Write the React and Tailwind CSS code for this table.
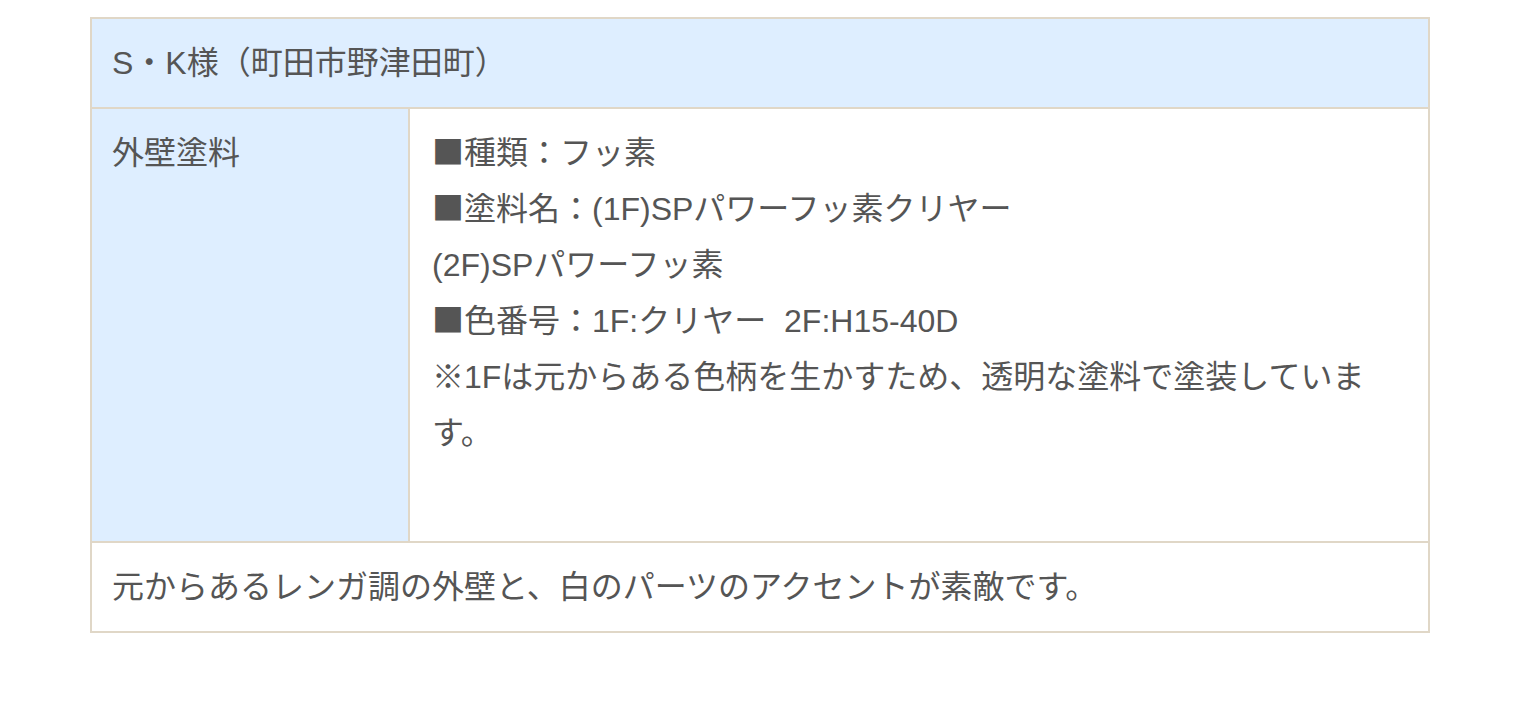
function Sq() {
  return <span className="font-['Noto_Sans_CJK_JP',sans-serif] leading-none">■</span>;
}

export default function App() {
  return (
    <div className="min-h-[716px] bg-white pt-[17px] pl-[90px] font-['Liberation_Sans','Noto_Sans_CJK_JP',sans-serif] text-[32px] leading-[56px] text-[#555]">
      <div className="w-[1340px] border-2 border-[#e0d7c7]">
        <div className="border-b-2 border-[#e0d7c7] bg-[#deeeff] px-5 py-4">
          S・K様（町田市野津田町）
        </div>
        <div className="flex h-[434px] border-b-2 border-[#e0d7c7]">
          <div className="w-[318px] shrink-0 border-r-2 border-[#e0d7c7] bg-[#deeeff] px-5 py-4">
            外壁塗料
          </div>
          <div className="flex-1 px-[22px] py-4">
            <p><Sq />種類：フッ素</p>
            <p><Sq />塗料名：(1F)SPパワーフッ素クリヤー</p>
            <p>(2F)SPパワーフッ素</p>
            <p><Sq />色番号：1F:クリヤー&nbsp;&nbsp;2F:H15-40D</p>
            <p>
              <span className="font-['Noto_Sans_CJK_JP',sans-serif] leading-none">※</span>1Fは元からある色柄を生かすため、透明な塗料で塗装していま
              <br />
              す。
            </p>
          </div>
        </div>
        <div className="px-5 py-4">
          元からあるレンガ調の外壁と、白のパーツのアクセントが素敵です。
        </div>
      </div>
    </div>
  );
}
